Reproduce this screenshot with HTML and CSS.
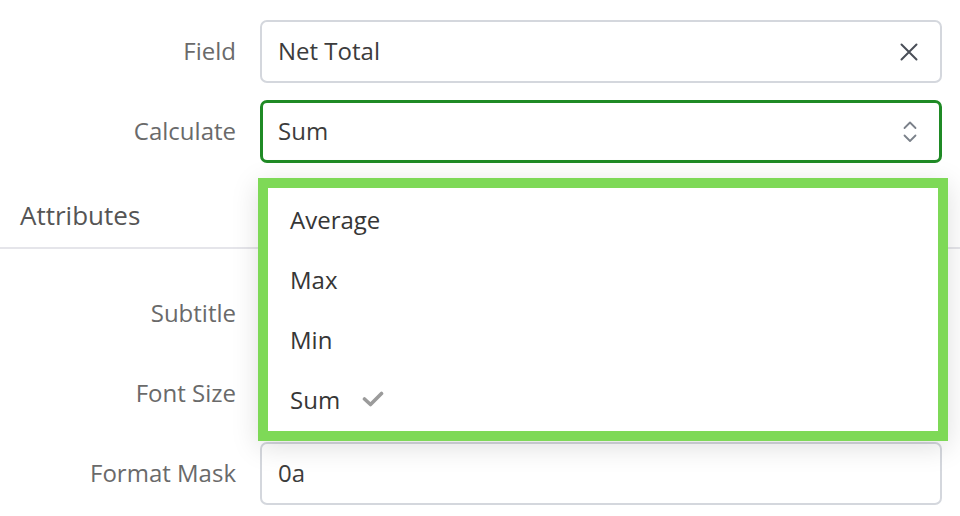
FILE: index.html
```html
<!DOCTYPE html>
<html lang="en">
<head>
    <meta charset="UTF-8">
    <meta name="viewport" content="width=device-width, initial-scale=1.0">
    <title>Calculate</title>
    <link rel="stylesheet" href="styles.css">
</head>
<body>
    <div class="panel">
        <div class="form-row">
            <label class="form-label">Field</label>
            <div class="input">
                <span class="input-value">Net Total</span>
                <svg class="icon-clear" width="18" height="18" viewBox="0 0 18 18">
                    <path d="M1.5 1.5 L16.5 16.5 M16.5 1.5 L1.5 16.5" stroke="#4a4f58" stroke-width="2" stroke-linecap="round" fill="none"/>
                </svg>
            </div>
        </div>
        <div class="form-row">
            <label class="form-label">Calculate</label>
            <div class="select-wrap">
                <div class="input input-active">
                    <span class="input-value">Sum</span>
                    <svg class="icon-sort" width="14" height="22" viewBox="0 0 14 22">
                        <path d="M1.5 7 L7 1.5 L12.5 7 M1.5 14.5 L7 20 L12.5 14.5" stroke="#7b818a" stroke-width="1.8" stroke-linecap="round" stroke-linejoin="round" fill="none"/>
                    </svg>
                </div>
                <ul class="dropdown">
                    <li>Average</li>
                    <li>Max</li>
                    <li>Min</li>
                    <li class="selected">Sum
                        <svg class="icon-check" width="22" height="16" viewBox="0 0 22 16">
                            <path d="M2.5 8 L8.5 13.5 L19.5 2.5" stroke="#9b9b9b" stroke-width="3.6" stroke-linecap="round" stroke-linejoin="round" fill="none"/>
                        </svg>
                    </li>
                </ul>
            </div>
        </div>

        <h2 class="section-title">Attributes</h2>

        <div class="form-row">
            <label class="form-label">Subtitle</label>
            <div class="input"><span class="input-value"></span></div>
        </div>
        <div class="form-row">
            <label class="form-label">Font Size</label>
            <div class="input"><span class="input-value"></span></div>
        </div>
        <div class="form-row">
            <label class="form-label">Format Mask</label>
            <div class="input"><span class="input-value">0a</span></div>
        </div>
    </div>
</body>
</html>
```

FILE: styles.css
```css
body {
    margin: 0;
    font-family: "Open Sans", "Liberation Sans", sans-serif;
    background: #fff;
    color: #3c3c3c;
}
.panel {
    padding-top: 20px;
}
.form-row {
    display: grid;
    grid-template-columns: 236px 1fr;
    column-gap: 24px;
    align-items: center;
    padding-right: 18px;
    margin-bottom: 17px;
}
.form-label {
    text-align: right;
    font-size: 24px;
    color: #6a6a6a;
    padding-bottom: 2px;
}
.input {
    display: flex;
    align-items: center;
    justify-content: space-between;
    height: 63px;
    box-sizing: border-box;
    padding: 0 22px 0 16px;
    border: 2px solid #d4d7dd;
    border-radius: 7px;
    background: #fff;
}
.input-value {
    font-size: 24px;
    color: #3c3c3c;
    padding-bottom: 2px;
}
.input-active {
    border: 3px solid #1f8a25;
    padding-left: 15px;
    padding-right: 22px;
}
.select-wrap {
    position: relative;
}
.dropdown {
    position: absolute;
    top: calc(100% + 15px);
    left: -2px;
    right: -6px;
    margin: 0;
    padding: 1px 0 0;
    height: 263px;
    box-sizing: border-box;
    list-style: none;
    background: #fff;
    border: 10px solid #7ed957;
    box-shadow: 0 6px 26px rgba(0, 0, 0, 0.13);
    z-index: 10;
}
.dropdown li {
    display: flex;
    align-items: center;
    gap: 22px;
    height: 60px;
    padding-left: 22px;
    font-size: 24px;
    color: #363636;
}
.icon-check {
    margin-top: 0;
}
.section-title {
    display: flex;
    align-items: center;
    box-sizing: border-box;
    height: 69px;
    margin: 0 0 33px;
    padding: 2px 20px 0;
    font-size: 26px;
    font-weight: 400;
    color: #555;
    border-bottom: 2px solid #e5e5ea;
}
```
